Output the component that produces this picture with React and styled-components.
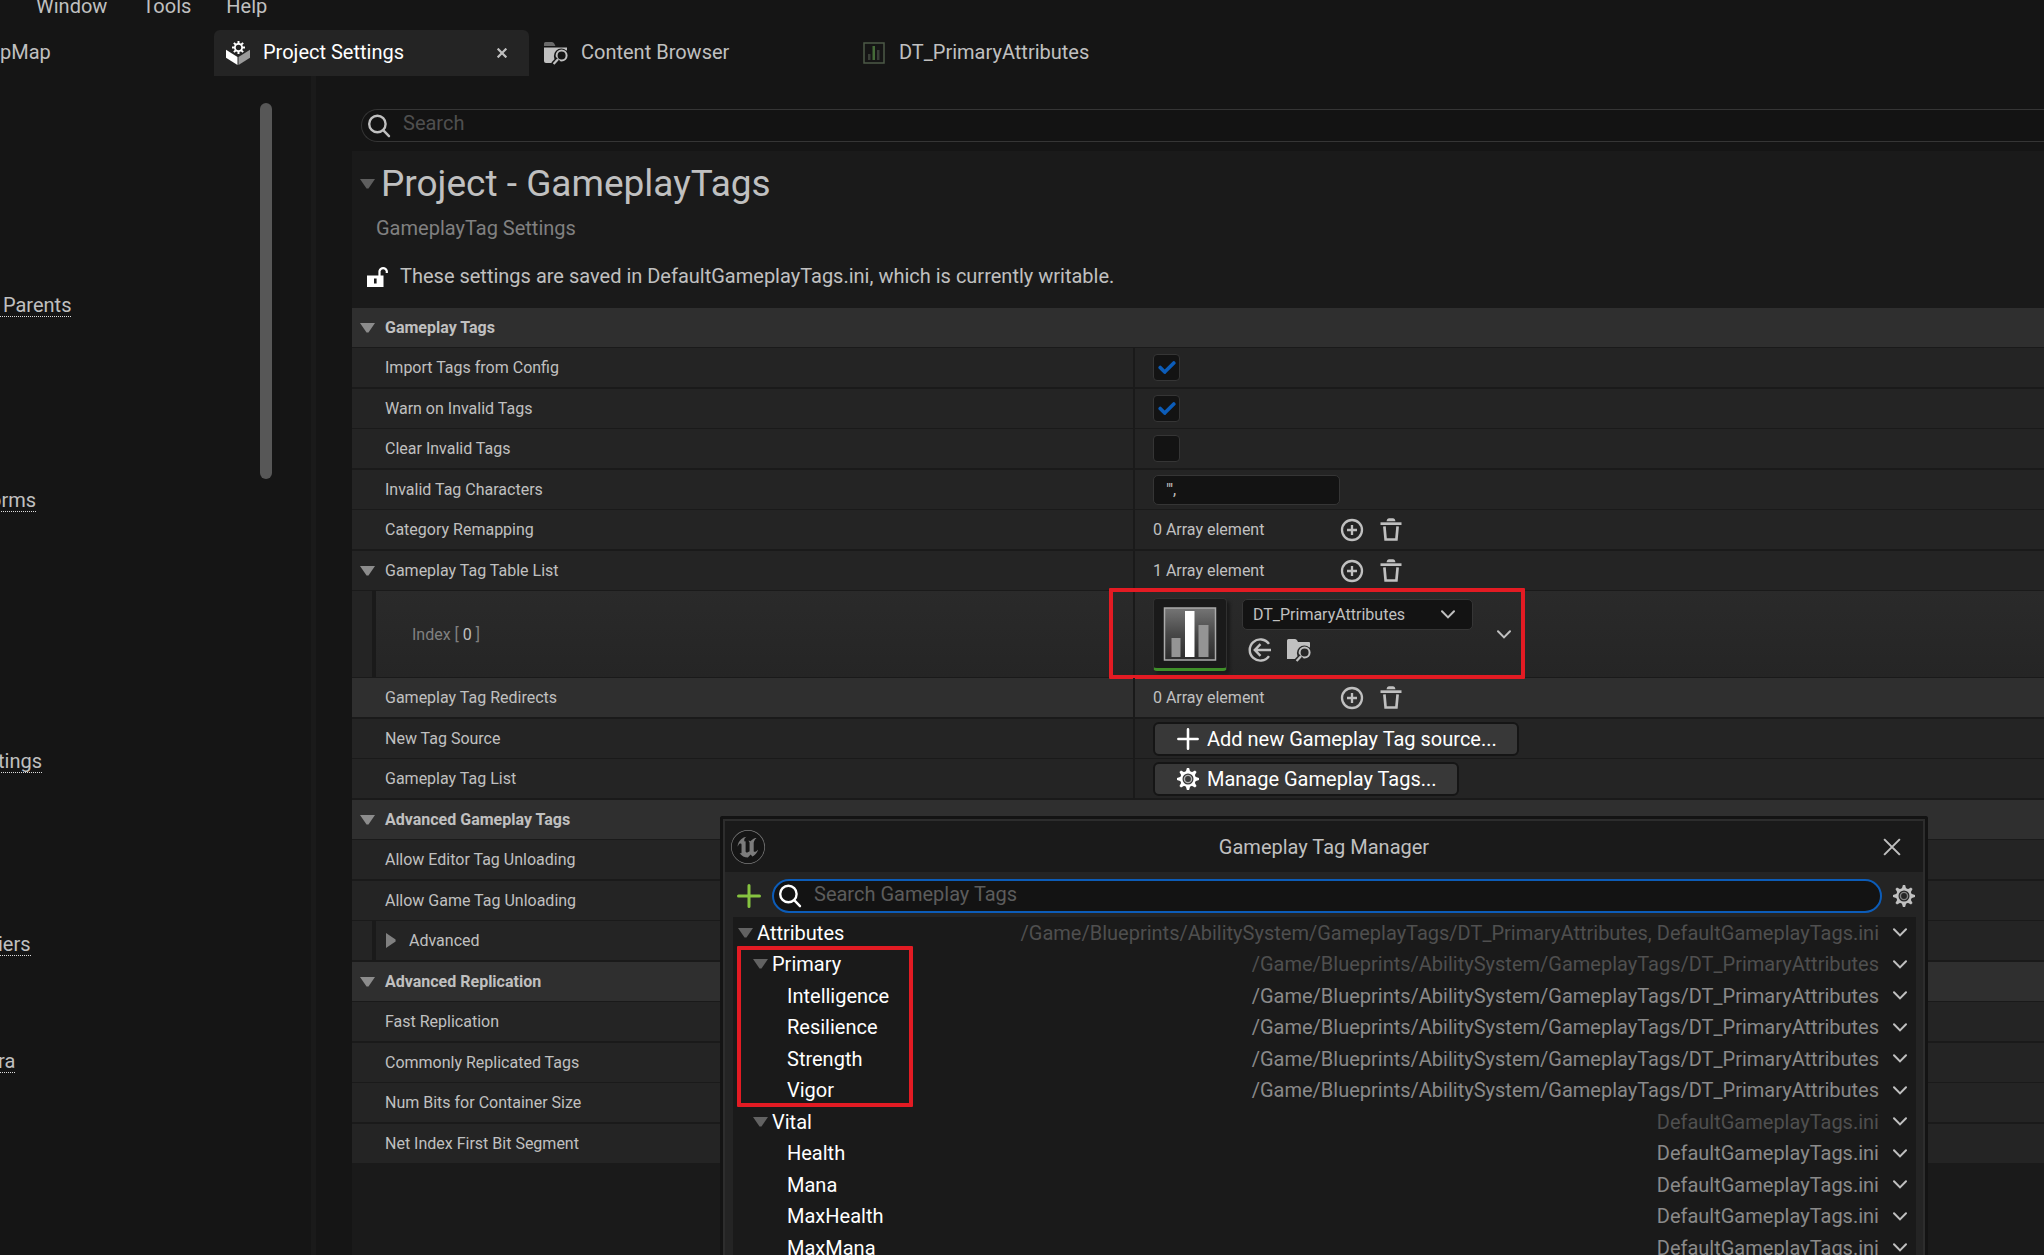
import React from "react";
import styled, { createGlobalStyle } from "styled-components";
import { SiUnrealengine } from "react-icons/si";

const c = {
  base: "#151515",
  panel: "#1a1a1a",
  row: "#242424",
  header: "#2f2f2f",
  input: "#131313",
  edge: "#353535",
  text: "#c0c0c0",
  dim: "#808080",
  faint: "#4f4f4f",
  blue: "#0c5cb8",
  red: "#e31b23",
};

const GlobalStyle = createGlobalStyle`
  * { box-sizing: border-box; }
  body {
    margin: 0;
    background: ${c.base};
    color: ${c.text};
    font-family: Roboto, "Liberation Sans", sans-serif;
    font-size: 20px;
  }
  button, input, select { font: inherit; color: inherit; margin: 0; }
  svg { display: block; flex: none; }
`;

const Page = styled.div`
  position: relative;
  display: flex;
  flex-direction: column;
  height: 100vh;
  overflow: hidden;
`;

const BareButton = styled.button`
  display: flex;
  align-items: center;
  justify-content: center;
  padding: 0;
  border: 0;
  background: none;
  color: ${(p) => p.$color || c.text};
`;

/* ---------- menu and tabs ---------- */

const MenuBar = styled.nav`
  display: flex;
  align-items: flex-start;
  gap: 35px;
  flex: none;
  height: 30px;
  padding-left: 36px;
  button { line-height: 12px; }
`;

const TabBar = styled.div`
  display: flex;
  gap: 3px;
  flex: none;
  height: 46px;
`;

const Tab = styled.div`
  display: flex;
  align-items: center;
  gap: 13px;
  width: ${(p) => (p.$cut ? 211 : 315)}px;
  padding: 0 22px 0 ${(p) => (p.$cut ? 0 : 12)}px;
  border-radius: 6px 6px 0 0;
  background: ${(p) => (p.$active ? c.row : "transparent")};
  color: ${(p) => (p.$active ? "#fff" : c.text)};
`;

const TabLabel = styled.button`
  flex: 1;
  padding: 0 0 2px;
  border: 0;
  background: none;
  text-align: left;
  white-space: nowrap;
`;

/* ---------- body ---------- */

const Body = styled.div`
  display: flex;
  flex: 1;
  min-height: 0;
`;

const Sidebar = styled.aside`
  display: flex;
  flex: none;
  width: 316px;
  border-right: 5px solid ${c.panel};
`;

const LinkList = styled.nav`
  display: flex;
  flex-direction: column;
  align-items: flex-start;
  flex: 1;
  margin-left: -2px;
  padding-top: 217px;
`;

const SideLink = styled.a`
  height: 24px;
  margin-bottom: ${(p) => p.$after}px;
  margin-left: ${(p) => (p.$clipped ? -8 : 0)}px;
  border-bottom: 1px dotted #dcdcdc;
  color: ${c.text};
  line-height: 24px;
  text-decoration: none;
  white-space: pre;
`;

const ScrollThumb = styled.div`
  width: 12px;
  height: 376px;
  margin: 27px 39px 0 0;
  border-radius: 6px;
  background: #575757;
`;

const Main = styled.main`
  display: flex;
  flex-direction: column;
  flex: 1;
  min-width: 0;
  padding: 33px 0 0 36px;
`;

const SearchBox = styled.label`
  display: flex;
  align-items: center;
  gap: 12px;
  height: ${(p) => (p.$focus ? 34 : 33)}px;
  padding-left: ${(p) => (p.$focus ? 5 : 6)}px;
  border: ${(p) => (p.$focus ? `2px solid ${c.blue}` : `1px solid ${c.edge}`)};
  border-radius: 17px;
  background: ${c.input};
  color: ${(p) => (p.$focus ? "#fff" : c.text)};
  flex: ${(p) => (p.$focus ? "1" : "none")};
  margin-left: ${(p) => (p.$focus ? 0 : 9)}px;
  ${(p) => !p.$focus && "border-right: 0; border-radius: 17px 0 0 17px;"}
  input {
    flex: 1;
    min-width: 0;
    height: 28px;
    padding: 0 0 5px;
    border: 0;
    outline: 0;
    background: none;
  }
  input::placeholder { color: ${(p) => (p.$focus ? "#5c5c5c" : c.faint)}; opacity: 1; }
`;

const Panel = styled.section`
  flex: 1;
  margin-top: 9px;
  background: ${c.panel};
`;

const PanelHead = styled.header`
  padding: 9px 0 17px 8px;
`;

const TitleRow = styled.div`
  display: flex;
  align-items: center;
  gap: 6px;
  h1 {
    margin: 0;
    font-size: 37px;
    font-weight: 400;
    line-height: 48px;
  }
`;

const Description = styled.p`
  margin: 5px 0 18px;
  padding-left: 16px;
  color: ${c.dim};
  line-height: 30px;
`;

const Status = styled.p`
  display: flex;
  align-items: center;
  gap: 12px;
  margin: 0;
  padding-left: 7px;
  line-height: 30px;
`;

/* ---------- property grid ---------- */

const Grid = styled.div`
  font-size: 16px;
  > * { border-bottom: 1px solid ${c.panel}; }
  > :nth-child(even) { border-bottom-width: 2px; }
`;

const CategoryRow = styled.div`
  display: flex;
  align-items: center;
  gap: 10px;
  box-sizing: content-box;
  height: 39px;
  padding-left: 8px;
  background: ${c.header};
  h2 { margin: 0; font-size: 16px; font-weight: 700; }
`;

const PropertyRow = styled.div`
  display: grid;
  grid-template-columns: 6fr 7fr;
  box-sizing: content-box;
  height: ${(p) => (p.$tall ? 86 : 39)}px;
  background: ${(p) => (p.$hover ? c.header : c.row)};
`;

const Nested = styled.div`
  > :first-child { border-bottom: 1px solid ${c.panel}; }
`;

const NameCell = styled.div`
  display: flex;
  align-items: center;
  gap: 10px;
  padding-left: ${(p) => (p.$toggle ? 8 : 33)}px;
`;

const NestedName = styled.div`
  display: flex;
  align-items: center;
  gap: 13px;
  margin-left: 20px;
  padding-left: ${(p) => (p.$toggle ? 10 : 36)}px;
  border-left: 4px solid ${c.panel};
  background: ${(p) => (p.$toggle ? "none" : "linear-gradient(#2a2a2a, #252525)")};
  color: ${(p) => (p.$toggle ? c.text : c.dim)};
  b { color: ${c.text}; font-weight: 400; }
`;

const ValueCell = styled.div`
  position: relative;
  display: flex;
  align-items: center;
  gap: 15px;
  padding-left: 18px;
  border-left: 2px solid ${c.panel};
  background: ${(p) => (p.$nested ? "linear-gradient(#2a2a2a, #252525)" : "none")};
`;

const CheckWrap = styled.span`
  position: relative;
  display: block;
  width: 27px;
  height: 27px;
  input {
    appearance: none;
    display: block;
    width: 27px;
    height: 27px;
    border: 1px solid ${c.edge};
    border-radius: 4px;
    background: ${c.input};
  }
  svg { position: absolute; top: 6px; left: 5px; display: none; pointer-events: none; }
  input:checked + svg { display: block; }
`;

const TextField = styled.input`
  width: 187px;
  height: 30px;
  padding: 0 12px;
  border: 1px solid ${c.edge};
  border-radius: 5px;
  background: ${c.input};
`;

const ArrayCount = styled.span`
  width: 172px;
`;

const ActionButton = styled.button`
  display: flex;
  align-items: center;
  gap: 8px;
  height: 34px;
  padding: 0 20px 0 22px;
  border: 2px solid ${c.base};
  border-radius: 6px;
  background: #383838;
  color: #fff;
  font-size: 20px;
  line-height: 28px;
  white-space: nowrap;
`;

const Thumbnail = styled.div`
  width: 74px;
  height: 73px;
  padding: 8px 9px;
  border: 1px solid #303030;
  border-bottom: 3px solid #3f8f29;
  border-radius: 4px;
  background: ${c.panel};
  box-shadow: 3px 3px 3px ${c.panel};
`;

const AssetControls = styled.div`
  display: flex;
  flex-direction: column;
  gap: 8px;
  height: 70px;
`;

const AssetActions = styled.div`
  display: flex;
  gap: 15px;
  padding-left: 6px;
`;

const SelectWrap = styled.div`
  position: relative;
  select {
    appearance: none;
    display: block;
    width: 231px;
    height: 31px;
    padding: 0 40px 0 10px;
    border: 1px solid ${c.edge};
    border-radius: 5px;
    background: ${c.input};
  }
  svg { position: absolute; top: 11px; right: 18px; pointer-events: none; }
`;

const Highlight = styled.div`
  position: absolute;
  top: ${(p) => p.$top}px;
  left: ${(p) => p.$left}px;
  width: ${(p) => p.$width}px;
  height: ${(p) => p.$height}px;
  border: 4px solid ${c.red};
  border-radius: 1px;
  pointer-events: none;
`;

const Expander = styled(BareButton)`
  margin-left: 9px;
`;

/* ---------- tag manager window ---------- */

const Dialog = styled.section`
  position: absolute;
  top: 816px;
  right: 116px;
  bottom: 0;
  left: 720px;
  display: flex;
  flex-direction: column;
  border: 3px solid #131313;
  border-bottom: 0;
  border-radius: 3px 3px 0 0;
  background: ${c.row};
  overflow: hidden;
`;

const DialogFrame = styled.div`
  flex: 1;
  min-height: 0;
  border: 2px solid #2d2d2d;
  border-bottom: 0;
`;

const TitleBar = styled.header`
  display: grid;
  grid-template-columns: 1fr auto 1fr;
  align-items: center;
  height: 51px;
  background: ${c.panel};
  h2 { margin: 0; font-size: 20px; font-weight: 400; }
  button { justify-self: end; margin-right: 22px; }
`;

const Logo = styled.span`
  display: flex;
  width: 34px;
  height: 34px;
  margin-left: 6px;
  border-radius: 50%;
  background: ${c.base};
  color: #7c7c7c;
`;

const Toolbar = styled.div`
  display: flex;
  align-items: center;
  gap: 11px;
  height: 45px;
  padding: 3px 8px 0 12px;
`;

const TagTree = styled.ul`
  position: relative;
  margin: 0 7px 0 8px;
  padding: 0;
  background: ${c.panel};
  list-style: none;
`;

const TagRow = styled.li`
  display: flex;
  align-items: center;
  height: 31px;
  padding: 0 9px 0 ${(p) => 5 + p.$level * 15}px;
  &:nth-child(even) { height: 32px; }
`;

const ToggleSlot = styled.span`
  display: flex;
  width: 19px;
`;

const TagName = styled.span`
  flex: 1;
  color: #fff;
`;

const TagSource = styled.span`
  margin-right: 14px;
  color: ${(p) => (p.$faint ? c.faint : "#8a8a8a")};
  white-space: nowrap;
`;

/* ---------- drawings ---------- */

const Triangle = ({ color = "#8c8c8c" }) => (
  <svg width="15" height="10" viewBox="0 0 15 10"><path d="M0 0h15L8.5 9.4h-2z" fill={color} /></svg>
);
const TriangleRight = () => (
  <svg width="10" height="15" viewBox="0 0 10 15"><path d="M0 0v15L9.6 8.5v-2z" fill="#808080" /></svg>
);
const Toggle = ({ name, color }) => (
  <BareButton aria-label={`Toggle ${name}`}><Triangle color={color} /></BareButton>
);
const Chevron = () => (
  <svg width="14" height="9" viewBox="0 0 14 9" fill="none" stroke="currentColor" strokeWidth="2" strokeLinecap="round">
    <path d="M1 1.2 7 7.4l6-6.2" />
  </svg>
);
const SearchIcon = () => (
  <svg width="23" height="24" viewBox="0 0 23 24" fill="none" stroke="currentColor" strokeWidth="2.4" strokeLinecap="round">
    <circle cx="9.4" cy="10" r="8.2" /><path d="m15.4 16.400 5.600 5.800" />
  </svg>
);
const Gear = () => (
  <svg width="22" height="22" viewBox="1 1 22 22">
    {[0, 45, 90, 135, 180, 225, 270, 315].map((a) => (
      <path key={a} d="M9.600 5.600 10.900 1h2.200l1.300 4.600z" fill="currentColor" transform={`rotate(${a} 12 12)`} />
    ))}
    <circle cx="12" cy="12" r="6.700" fill="none" stroke="currentColor" strokeWidth="2.400" />
    <circle cx="12" cy="12" r="3.600" fill="none" stroke="currentColor" strokeWidth="1.400" opacity=".6" />
  </svg>
);
const Plus = ({ size, width }) => (
  <svg width={size} height={size} viewBox="0 0 24 24" fill="none" stroke="currentColor" strokeWidth={width} strokeLinecap="round">
    <path d="M12 1.500v21M1.500 12h21" />
  </svg>
);
const Cross = ({ size, width }) => (
  <svg width={size} height={size} viewBox="0 0 16 16" fill="none" stroke="currentColor" strokeWidth={width}>
    <path d="m1 1 14 14M15 1 1 15" />
  </svg>
);
const AddCircle = () => (
  <svg width="24" height="24" viewBox="0 0 24 24" fill="none" stroke="currentColor" strokeWidth="2.300">
    <circle cx="12" cy="12" r="10" /><path d="M12 7v10M7 12h10" />
  </svg>
);
const Trash = () => (
  <svg width="24" height="24" viewBox="0 0 24 24" fill="currentColor">
    <path d="M7.500 3.200q.500-2.900 2.300-2.900h4.400q1.800 0 2.300 2.900z" />
    <path d="M1.500 4.300h21v2.700h-21z" />
    <path d="M5.400 8.400 6.600 21.500h10.800l1.200-13.100" fill="none" stroke="currentColor" strokeWidth="2.700" />
  </svg>
);
const FolderSearch = ({ flap, bg }) => (
  <svg width="24" height="24" viewBox="0 0 24 24">
    <path d="M0 2.500Q0 1 1.500 1H8q1.500 0 2.200 1.500L11.500 5H0z" fill={flap} />
    <path d={flap === c.text ? "M0 4h22q1 0 1 1v3H0zM0 6h23v3L12 21H0z" : "M0 6.500h23V9L12 22H2q-2 0-2-2z"} fill={c.text} />
    <circle cx="17.300" cy="15" r="7.400" fill={bg} />
    <circle cx="17.600" cy="14.600" r="5" fill="none" stroke={c.text} strokeWidth="2" />
    <path d="m14.200 18-5 5.200" stroke={bg} strokeWidth="5" />
    <path d="m14.200 18-4.600 5" stroke={c.text} strokeWidth="2.200" />
  </svg>
);
const SettingsBox = () => (
  <svg width="24" height="24" viewBox="0 0 24 24">
    <path d="M0 8.800 11.500 16v8L0 16.800z" fill="#fff" />
    <path d="M24 8.800 12.500 16v8L24 16.800z" fill="#9a9a9a" />
    <circle cx="12.500" cy="6.500" r="7.200" fill={c.row} />
    {[0, 45, 90, 135, 180, 225, 270, 315].map((a) => (
      <path key={a} d="M11.500 0h2v3.400h-2z" fill="#fff" transform={`rotate(${a} 12.500 6.500)`} />
    ))}
    <circle cx="12.500" cy="6.500" r="3.600" fill={c.row} stroke="#fff" strokeWidth="1.800" />
  </svg>
);
const TableIcon = () => (
  <svg width="24" height="24" viewBox="0 0 24 24">
    <rect x="2" y="2" width="20" height="20" fill="none" stroke="#4c5a47" strokeWidth="1.500" />
    <path d="M6 13h2.500v6H6zM15 9h2.500v10H15z" fill="#3a3f38" />
    <path d="M10.500 5H13v14h-2.500z" fill="#456b38" />
  </svg>
);
const Unlock = () => (
  <svg width="21" height="22" viewBox="0 0 21 22">
    <path d="M12.500 11V6a3.900 4.300 0 0 1 7.300 0v2" fill="none" stroke="#fff" strokeWidth="2.200" />
    <path fillRule="evenodd" d="M0 10.500h16.500V22H0zM7 13.500v5h2.600v-5z" fill="#fff" />
  </svg>
);
const UseSelected = () => (
  <svg width="24" height="24" viewBox="0 0 24 24" fill="none" stroke="currentColor" strokeWidth="2.400">
    <path d="M21 5.900A10.600 10.600 0 1 0 21 18.100" />
    <path d="M23 12H7M12.500 6.200 6.800 12l5.700 5.800" />
  </svg>
);
const TableArt = () => (
  <svg width="54" height="54" viewBox="0 0 53 54">
    <defs>
      <linearGradient id="art" x1="0" y1="0" x2="0" y2="1">
        <stop offset="0" stopColor="#757575" /><stop offset=".5" stopColor="#484848" /><stop offset="1" stopColor="#2c2c2c" />
      </linearGradient>
    </defs>
    <rect x="1" y="1" width="51" height="52" fill="url(#art)" stroke="#ababab" strokeWidth="1.500" />
    <path d="M8 31h9v19H8zM35 18h10v32H35z" fill="#949494" />
    <path d="M21.500 4h9.500v46h-9.500z" fill="#fff" />
  </svg>
);
const Tick = () => (
  <svg width="18" height="15" viewBox="0 0 18 15" fill="none" stroke={c.blue} strokeWidth="3.600" strokeLinecap="round" strokeLinejoin="round">
    <path d="m2.200 7.500 4.500 4.600L15.800 3" />
  </svg>
);

/* ---------- pieces ---------- */

const Category = ({ name }) => (
  <CategoryRow><Toggle name={name} /><h2>{name}</h2></CategoryRow>
);

const Property = ({ name, id, toggle, hover, children }) => (
  <PropertyRow $hover={hover}>
    <NameCell $toggle={toggle}>
      {toggle && <Toggle name={name} />}
      {id ? <label htmlFor={id}>{name}</label> : <span>{name}</span>}
    </NameCell>
    <ValueCell>{children}</ValueCell>
  </PropertyRow>
);

const Check = ({ id, on }) => (
  <CheckWrap><input id={id} type="checkbox" defaultChecked={on} /><Tick /></CheckWrap>
);

const ArrayValue = ({ count }) => (
  <>
    <ArrayCount>{count} Array element</ArrayCount>
    <BareButton aria-label="Add element"><AddCircle /></BareButton>
    <BareButton aria-label="Remove all elements"><Trash /></BareButton>
  </>
);

const TABLE = "/Game/Blueprints/AbilitySystem/GameplayTags/DT_PrimaryAttributes";
const INI = "DefaultGameplayTags.ini";
const TAGS = [
  { name: "Attributes", level: 0, open: true, source: `${TABLE}, ${INI}` },
  { name: "Primary", level: 1, open: true, source: TABLE },
  { name: "Intelligence", level: 2, source: TABLE },
  { name: "Resilience", level: 2, source: TABLE },
  { name: "Strength", level: 2, source: TABLE },
  { name: "Vigor", level: 2, source: TABLE },
  { name: "Vital", level: 1, open: true, source: INI },
  { name: "Health", level: 2, source: INI },
  { name: "Mana", level: 2, source: INI },
  { name: "MaxHealth", level: 2, source: INI },
  { name: "MaxMana", level: 2, source: INI },
];

const LINKS = [
  { text: " Parents", after: 171 },
  { text: "orms", after: 237, clipped: true },
  { text: "tings", after: 159 },
  { text: "iers", after: 93 },
  { text: "ra", after: 0 },
];

export default function App() {
  return (
    <Page>
      <GlobalStyle />
      <MenuBar>
        <BareButton>Window</BareButton>
        <BareButton>Tools</BareButton>
        <BareButton>Help</BareButton>
      </MenuBar>
      <TabBar>
        <Tab $cut><TabLabel>pMap</TabLabel></Tab>
        <Tab $active>
          <SettingsBox />
          <TabLabel>Project Settings</TabLabel>
          <BareButton aria-label="Close tab"><Cross size={10} width={3.6} /></BareButton>
        </Tab>
        <Tab><FolderSearch flap="#6a6a6a" bg={c.base} /><TabLabel>Content Browser</TabLabel></Tab>
        <Tab><TableIcon /><TabLabel>DT_PrimaryAttributes</TabLabel></Tab>
      </TabBar>

      <Body>
        <Sidebar>
          <LinkList>
            {LINKS.map((l) => (
              <SideLink key={l.text} href="#" $after={l.after} $clipped={l.clipped}>{l.text}</SideLink>
            ))}
          </LinkList>
          <ScrollThumb />
        </Sidebar>

        <Main>
          <SearchBox>
            <SearchIcon />
            <input type="text" placeholder="Search" aria-label="Search settings" />
          </SearchBox>
          <Panel>
            <PanelHead>
              <TitleRow><Toggle name="section" color="#5e5e5e" /><h1>Project - GameplayTags</h1></TitleRow>
              <Description>GameplayTag Settings</Description>
              <Status><Unlock />These settings are saved in DefaultGameplayTags.ini, which is currently writable.</Status>
            </PanelHead>

            <Grid>
              <Category name="Gameplay Tags" />
              <Property name="Import Tags from Config" id="import"><Check id="import" on /></Property>
              <Property name="Warn on Invalid Tags" id="warn"><Check id="warn" on /></Property>
              <Property name="Clear Invalid Tags" id="clear"><Check id="clear" /></Property>
              <Property name="Invalid Tag Characters" id="chars">
                <TextField id="chars" type="text" defaultValue={`"',`} />
              </Property>
              <Property name="Category Remapping"><ArrayValue count={0} /></Property>
              <Nested>
                <Property name="Gameplay Tag Table List" toggle><ArrayValue count={1} /></Property>
                <PropertyRow $tall>
                  <NestedName><label htmlFor="asset">Index [ <b>0</b> ]</label></NestedName>
                  <ValueCell $nested>
                    <Thumbnail><TableArt /></Thumbnail>
                    <AssetControls>
                      <SelectWrap>
                        <select id="asset" defaultValue="DT_PrimaryAttributes">
                          <option>DT_PrimaryAttributes</option>
                        </select>
                        <Chevron />
                      </SelectWrap>
                      <AssetActions>
                        <BareButton aria-label="Use selected asset"><UseSelected /></BareButton>
                        <BareButton aria-label="Browse to asset"><FolderSearch flap={c.text} bg="#262626" /></BareButton>
                      </AssetActions>
                    </AssetControls>
                    <Expander aria-label="Element options"><Chevron /></Expander>
                    <Highlight $top={-3} $left={-26} $width={416} $height={91} />
                  </ValueCell>
                </PropertyRow>
              </Nested>
              <Property name="Gameplay Tag Redirects" hover><ArrayValue count={0} /></Property>
              <Property name="New Tag Source">
                <ActionButton><Plus size={22} width={2.8} />Add new Gameplay Tag source...</ActionButton>
              </Property>
              <Property name="Gameplay Tag List">
                <ActionButton><Gear />Manage Gameplay Tags...</ActionButton>
              </Property>
              <Category name="Advanced Gameplay Tags" />
              <Property name="Allow Editor Tag Unloading" />
              <Property name="Allow Game Tag Unloading" />
              <PropertyRow>
                <NestedName $toggle>
                  <BareButton aria-label="Toggle Advanced"><TriangleRight /></BareButton>
                  <span>Advanced</span>
                </NestedName>
                <ValueCell />
              </PropertyRow>
              <Category name="Advanced Replication" />
              <Property name="Fast Replication" />
              <Property name="Commonly Replicated Tags" />
              <Property name="Num Bits for Container Size" />
              <Property name="Net Index First Bit Segment" />
            </Grid>
          </Panel>
        </Main>
      </Body>

      <Dialog aria-label="Gameplay Tag Manager">
        <DialogFrame>
          <TitleBar>
            <Logo><SiUnrealengine size={34} /></Logo>
            <h2>Gameplay Tag Manager</h2>
            <BareButton aria-label="Close"><Cross size={18} width={1.8} /></BareButton>
          </TitleBar>
          <Toolbar>
            <BareButton $color="#86c440" aria-label="Add tag"><Plus size={24} width={3} /></BareButton>
            <SearchBox $focus>
              <SearchIcon />
              <input type="text" placeholder="Search Gameplay Tags" aria-label="Search Gameplay Tags" />
            </SearchBox>
            <BareButton aria-label="Settings"><Gear /></BareButton>
          </Toolbar>
          <TagTree>
            {TAGS.map((t) => (
              <TagRow key={t.name} $level={t.level}>
                <ToggleSlot>{t.open && <Toggle name={t.name} color="#626262" />}</ToggleSlot>
                <TagName>{t.name}</TagName>
                <TagSource $faint={t.open}>{t.source}</TagSource>
                <BareButton aria-label={`${t.name} options`}><Chevron /></BareButton>
              </TagRow>
            ))}
            <Highlight $top={29} $left={4} $width={176} $height={161} />
          </TagTree>
        </DialogFrame>
      </Dialog>
    </Page>
  );
}
